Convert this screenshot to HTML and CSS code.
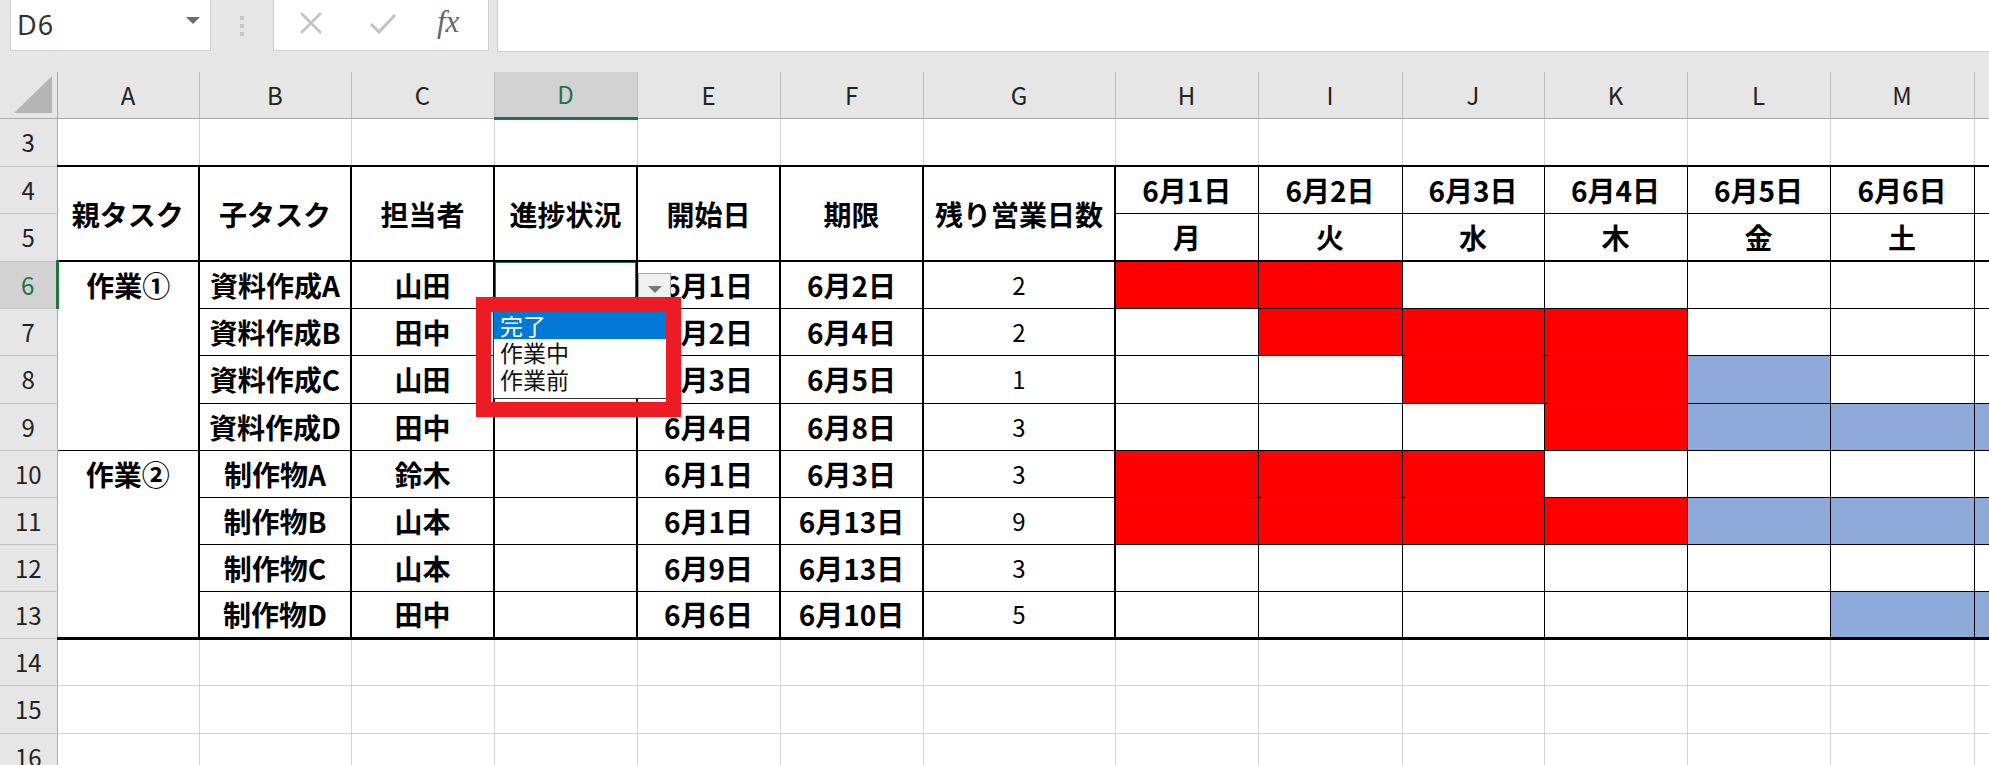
FILE: index.html
```html
<!DOCTYPE html>
<html lang="ja">
<head>
    <meta charset="UTF-8">
    <meta name="viewport" content="width=device-width, initial-scale=1.0">
    <title>タスク管理表</title>
    <link rel="stylesheet" href="styles.css">
</head>
<body>
    <!-- 名前ボックスと数式バー -->
    <div class="formula-bar">
        <div class="name-box">
            <span>D6</span>
            <svg class="nb-arrow" width="14" height="7" viewBox="0 0 14 7"><path d="M0 0 L14 0 L7 7 Z" fill="#6d6d6d"/></svg>
        </div>
        <div class="grip"><i></i><i></i><i></i></div>
        <div class="fx-buttons">
            <svg width="24" height="22" viewBox="0 0 24 22"><path d="M2 1 L22 21 M22 1 L2 21" stroke="#c3c3c3" stroke-width="2.6" fill="none"/></svg>
            <svg width="28" height="22" viewBox="0 0 28 22"><path d="M2 12 L10 20 L26 3" stroke="#c3c3c3" stroke-width="3" fill="none"/></svg>
            <span class="fx">fx</span>
        </div>
        <div class="formula-input"></div>
    </div>

    <div class="sheet-wrap">
        <table class="sheet">
            <colgroup>
                <col style="width:57px"><col style="width:142px"><col style="width:152px"><col style="width:143px">
                <col style="width:143px"><col style="width:143px"><col style="width:143px"><col style="width:192px">
                <col style="width:143px"><col style="width:144px"><col style="width:142px"><col style="width:143px">
                <col style="width:143px"><col style="width:144px"><col style="width:143px">
            </colgroup>
            <tr class="hdr">
                <th class="corner"><svg width="40" height="40" viewBox="0 0 40 40"><path d="M1 38 L39 38 L39 1 Z" fill="#b5b5b5"/></svg></th>
                <th class="ch">A</th><th class="ch">B</th><th class="ch">C</th><th class="ch on">D</th>
                <th class="ch">E</th><th class="ch">F</th><th class="ch">G</th><th class="ch">H</th>
                <th class="ch">I</th><th class="ch">J</th><th class="ch">K</th><th class="ch">L</th>
                <th class="ch">M</th><th class="ch">N</th>
            </tr>
            <tr class="h48">
                <th class="rh">3</th>
                <td></td><td></td><td></td><td></td><td></td><td></td><td></td>
                <td></td><td></td><td></td><td></td><td></td><td></td><td></td>
            </tr>
            <tr>
                <th class="rh">4</th>
                <td class="tk hd a" rowspan="2">親タスク</td>
                <td class="tk hd" rowspan="2">子タスク</td>
                <td class="tk hd" rowspan="2">担当者</td>
                <td class="tk hd" rowspan="2">進捗状況</td>
                <td class="tk hd" rowspan="2">開始日</td>
                <td class="tk hd" rowspan="2">期限</td>
                <td class="tk hd" rowspan="2">残り営業日数</td>
                <td class="gt date first">6月1日</td>
                <td class="gt date">6月2日</td>
                <td class="gt date">6月3日</td>
                <td class="gt date">6月4日</td>
                <td class="gt date">6月5日</td>
                <td class="gt date">6月6日</td>
                <td class="gt date">6月7日</td>
            </tr>
            <tr class="h48">
                <th class="rh">5</th>
                <td class="gt wday first">月</td>
                <td class="gt wday">火</td>
                <td class="gt wday">水</td>
                <td class="gt wday">木</td>
                <td class="gt wday">金</td>
                <td class="gt wday">土</td>
                <td class="gt wday">日</td>
            </tr>
            <tr>
                <th class="rh on">6</th>
                <td class="tk a">作業①</td><td class="tk">資料作成A</td><td class="tk">山田</td><td class="tk sel"></td>
                <td class="tk">6月1日</td><td class="tk">6月2日</td><td class="tk num">2</td>
                <td class="gt first red"></td><td class="gt red"></td><td class="gt"></td><td class="gt"></td>
                <td class="gt"></td><td class="gt"></td><td class="gt"></td>
            </tr>
            <tr>
                <th class="rh">7</th>
                <td class="tk a cont"></td><td class="tk">資料作成B</td><td class="tk">田中</td><td class="tk"></td>
                <td class="tk">6月2日</td><td class="tk">6月4日</td><td class="tk num">2</td>
                <td class="gt first"></td><td class="gt red"></td><td class="gt red"></td><td class="gt red"></td>
                <td class="gt"></td><td class="gt"></td><td class="gt"></td>
            </tr>
            <tr class="h48">
                <th class="rh">8</th>
                <td class="tk a cont"></td><td class="tk">資料作成C</td><td class="tk">山田</td><td class="tk"></td>
                <td class="tk">6月3日</td><td class="tk">6月5日</td><td class="tk num">1</td>
                <td class="gt first"></td><td class="gt"></td><td class="gt red"></td><td class="gt red"></td>
                <td class="gt blue"></td><td class="gt"></td><td class="gt"></td>
            </tr>
            <tr>
                <th class="rh">9</th>
                <td class="tk a cont"></td><td class="tk">資料作成D</td><td class="tk">田中</td><td class="tk"></td>
                <td class="tk">6月4日</td><td class="tk">6月8日</td><td class="tk num">3</td>
                <td class="gt first"></td><td class="gt"></td><td class="gt"></td><td class="gt red"></td>
                <td class="gt blue"></td><td class="gt blue"></td><td class="gt blue"></td>
            </tr>
            <tr>
                <th class="rh">10</th>
                <td class="tk a">作業②</td><td class="tk">制作物A</td><td class="tk">鈴木</td><td class="tk"></td>
                <td class="tk">6月1日</td><td class="tk">6月3日</td><td class="tk num">3</td>
                <td class="gt first red"></td><td class="gt red"></td><td class="gt red"></td><td class="gt"></td>
                <td class="gt"></td><td class="gt"></td><td class="gt"></td>
            </tr>
            <tr>
                <th class="rh">11</th>
                <td class="tk a cont"></td><td class="tk">制作物B</td><td class="tk">山本</td><td class="tk"></td>
                <td class="tk">6月1日</td><td class="tk">6月13日</td><td class="tk num">9</td>
                <td class="gt first red"></td><td class="gt red"></td><td class="gt red"></td><td class="gt red"></td>
                <td class="gt blue"></td><td class="gt blue"></td><td class="gt blue"></td>
            </tr>
            <tr>
                <th class="rh">12</th>
                <td class="tk a cont"></td><td class="tk">制作物C</td><td class="tk">山本</td><td class="tk"></td>
                <td class="tk">6月9日</td><td class="tk">6月13日</td><td class="tk num">3</td>
                <td class="gt first"></td><td class="gt"></td><td class="gt"></td><td class="gt"></td>
                <td class="gt"></td><td class="gt"></td><td class="gt"></td>
            </tr>
            <tr class="last">
                <th class="rh">13</th>
                <td class="tk a cont"></td><td class="tk">制作物D</td><td class="tk">田中</td><td class="tk"></td>
                <td class="tk">6月6日</td><td class="tk">6月10日</td><td class="tk num">5</td>
                <td class="gt first"></td><td class="gt"></td><td class="gt"></td><td class="gt"></td>
                <td class="gt"></td><td class="gt blue"></td><td class="gt blue"></td>
            </tr>
            <tr>
                <th class="rh">14</th>
                <td></td><td></td><td></td><td></td><td></td><td></td><td></td>
                <td></td><td></td><td></td><td></td><td></td><td></td><td></td>
            </tr>
            <tr class="h48">
                <th class="rh">15</th>
                <td></td><td></td><td></td><td></td><td></td><td></td><td></td>
                <td></td><td></td><td></td><td></td><td></td><td></td><td></td>
            </tr>
            <tr class="h48">
                <th class="rh">16</th>
                <td></td><td></td><td></td><td></td><td></td><td></td><td></td>
                <td></td><td></td><td></td><td></td><td></td><td></td><td></td>
            </tr>
        </table>

        <!-- 入力規則のドロップダウン -->
        <div class="dd-button">
            <svg width="14" height="7" viewBox="0 0 14 7"><path d="M0 0 L14 0 L7 7 Z" fill="#777"/></svg>
        </div>
        <ul class="dd-list">
            <li class="active">完了</li>
            <li>作業中</li>
            <li>作業前</li>
        </ul>
        <div class="mark"></div>
    </div>
</body>
</html>
```

FILE: styles.css
```css
html, body {
    margin: 0;
    overflow: hidden;
}
body {
    width: 1989px;
    height: 765px;
    background: #fff;
    font-family: "Noto Sans CJK JP", "Noto Sans", sans-serif;
    color: #000;
}

/* 数式バー */
.formula-bar {
    height: 72px;
    background: #e6e6e6;
    display: flex;
    align-items: flex-start;
}
.name-box {
    margin-left: 10px;
    width: 201px;
    height: 51px;
    box-sizing: border-box;
    background: #fff;
    border: 1px solid #d0d0d0;
    border-top: none;
    display: flex;
    align-items: center;
    justify-content: space-between;
    padding: 0 10px 2px 6px;
    font-family: "Noto Sans", sans-serif;
    font-size: 27px;
    letter-spacing: 1px;
    color: #333;
}
.nb-arrow {
    margin-bottom: 8px;
}
.grip {
    width: 62px;
    height: 51px;
    display: flex;
    flex-direction: column;
    align-items: center;
    justify-content: center;
    gap: 4px;
}
.grip i {
    display: block;
    width: 4px;
    height: 4px;
    background: #c6c6c6;
}
.fx-buttons {
    width: 216px;
    height: 51px;
    box-sizing: border-box;
    background: #fff;
    border: 1px solid #d0d0d0;
    border-top: none;
    display: flex;
    align-items: center;
    padding: 0 20px 4px 25px;
    gap: 46px;
}
.fx {
    font-family: "Liberation Serif", serif;
    font-style: italic;
    font-size: 31px;
    color: #666;
    margin-left: -6px;
    margin-bottom: 2px;
}
.formula-input {
    flex: 1;
    margin-left: 8px;
    height: 51px;
    background: #fff;
    border-left: 1px solid #d0d0d0;
    border-bottom: 1px solid #d0d0d0;
}

/* シート */
.sheet-wrap {
    position: relative;
}
.sheet {
    border-collapse: collapse;
    table-layout: fixed;
    width: 2117px;
}
.sheet tr {
    height: 47px;
}
.sheet tr.h48 {
    height: 48px;
}
.sheet tr.hdr {
    height: 46px;
}
.sheet td {
    border: 1px solid #d4d4d4;
    padding: 0;
    text-align: center;
    vertical-align: middle;
    font-size: 28px;
    font-weight: bold;
    line-height: 1;
    white-space: nowrap;
    overflow: hidden;
}
.sheet th {
    background: #e6e6e6;
    font-weight: normal;
    font-size: 24px;
    color: #222;
    padding: 0;
    line-height: 1;
}
.corner {
    border-right: 1px solid #ababab;
    border-bottom: 1px solid #ababab;
    text-align: right;
    vertical-align: bottom;
}
.corner svg {
    display: block;
    margin: 0 4px 3px auto;
}
.ch {
    border-right: 1px solid #bdbdbd;
    border-bottom: 1px solid #ababab;
    padding-top: 2px;
}
.ch.on {
    background: #d2d2d2;
    color: #217346;
    border-bottom: 3px solid #217346;
}
.rh {
    border-right: 1px solid #ababab;
    border-bottom: 1px solid #c4c4c4;
}
.rh.on {
    background: #d2d2d2;
    color: #217346;
    border-right: 3px solid #217346;
}

/* タスク表 */
.sheet td.tk {
    border-top: 1px solid #000;
    border-bottom: 1px solid #000;
    border-left: 2px solid #000;
    border-right: 2px solid #000;
}
.sheet td.hd {
    border-top: 2px solid #000;
    border-bottom: 2px solid #000;
}
.sheet td.a {
    border-left: none;
}
.sheet td.cont {
    border-top-style: hidden;
}
.sheet td.num {
    font-weight: normal;
    font-size: 24px;
}
.sheet td.gt {
    border: 1px solid #000;
}
.sheet td.date {
    border-top: 2px solid #000;
}
.sheet td.wday {
    border-bottom: 2px solid #000;
}
.sheet td.first {
    border-left: 2px solid #000;
}
.sheet tr.last td {
    border-bottom: 3px solid #000;
}
.red {
    background: #ff0000;
}
.blue {
    background: #8eaadb;
}

/* 選択セル */
.sel {
    position: relative;
}
.sel::after {
    content: "";
    position: absolute;
    left: -2px;
    top: -2px;
    right: -2px;
    bottom: -2px;
    border: 3px solid #217346;
}

/* ドロップダウン */
.dd-button {
    position: absolute;
    left: 638px;
    top: 201px;
    width: 33px;
    height: 33px;
    box-sizing: border-box;
    background: #f0f0f0;
    border: 1px solid #a6a6a6;
    display: flex;
    align-items: center;
    justify-content: center;
}
.dd-list {
    position: absolute;
    left: 493px;
    top: 238px;
    width: 175px;
    margin: 0;
    padding: 1px 0 5px;
    list-style: none;
    background: #fff;
    border: 1px solid #333;
    box-sizing: border-box;
}
.dd-list li {
    height: 27px;
    line-height: 27px;
    padding-left: 6px;
    font-size: 23px;
    color: #111;
}
.dd-list li.active {
    background: #0078d7;
    color: #fff;
}
.mark {
    position: absolute;
    left: 476px;
    top: 225px;
    width: 205px;
    height: 120px;
    box-sizing: border-box;
    border: 15px solid #ed1c24;
}
```
